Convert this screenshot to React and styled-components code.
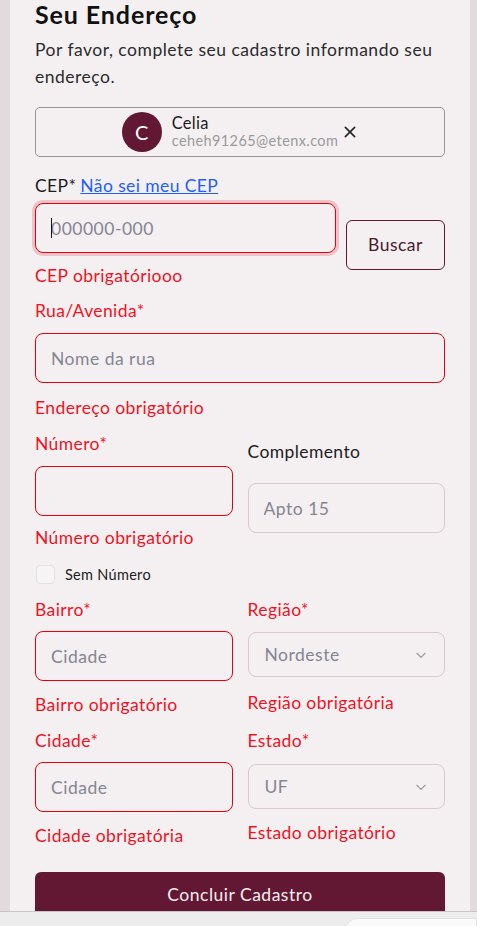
import React from 'react';
import styled, { createGlobalStyle } from 'styled-components';

const maroon = '#621732';
const red = '#e8000d';
const errorRed = '#f0131f';

const GlobalStyle = createGlobalStyle`
  html, body {
    margin: 0;
    padding: 0;
    background: #e2dadd;
    font-family: Lato, "Open Sans", sans-serif;
  }
  * { box-sizing: border-box; }
`;

const Page = styled.div`
  width: 477px;
  height: 926px;
  overflow: hidden;
  padding: 0 7px 0 10px;
`;

const Card = styled.main`
  background: #f4f0f2;
  min-height: 100%;
  padding: 0 25px 40px;
`;

const Title = styled.h1`
  margin: 0;
  padding-top: 1px;
  font-size: 25px;
  line-height: 26px;
  font-weight: 700;
  letter-spacing: 0.9px;
  color: #111;
`;

const Intro = styled.p`
  margin: 9px 0 0;
  font-size: 17.5px;
  line-height: 27px;
  color: #2b2b2b;
  letter-spacing: 0.5px;
`;

const UserChip = styled.div`
  margin-top: 17px;
  height: 50px;
  border: 1px solid #9a9597;
  border-radius: 5px;
  display: flex;
  align-items: center;
  justify-content: center;
  gap: 10px;
`;

const Avatar = styled.div`
  width: 40px;
  height: 40px;
  border-radius: 50%;
  background: ${maroon};
  color: #fff;
  display: flex;
  align-items: center;
  justify-content: center;
  font-size: 20px;
`;

const UserInfo = styled.div`
  display: flex;
  flex-direction: column;
  margin-top: -1px;
`;

const UserName = styled.span`
  font-size: 16.5px;
  line-height: 17px;
  letter-spacing: 0.3px;
  color: #1b1b1b;
`;

const UserEmail = styled.span`
  font-size: 14.5px;
  line-height: 17px;
  color: #9a9a9a;
  letter-spacing: 0.4px;
`;

const CloseButton = styled.button`
  border: none;
  background: none;
  padding: 0;
  margin-left: -6px;
  display: flex;
  color: #222;
`;

const Label = styled.label`
  display: block;
  font-size: 17.5px;
  line-height: 20px;
  letter-spacing: 0.4px;
  color: ${({ error }) => (error ? errorRed : '#1d1d1d')};
`;

const HelpLink = styled.a`
  color: #1f5eff;
  text-decoration: underline;
  margin-left: 4px;
`;

const CepRow = styled.div`
  display: flex;
  align-items: center;
  gap: 10px;
`;

const Column = styled.div`
  flex: 1;
  display: flex;
  flex-direction: column;
`;

const Input = styled.input`
  width: 100%;
  height: 50px;
  border-radius: 8px;
  border: 1px solid ${({ error }) => (error ? red : '#dac9ce')};
  background: #f4f0f2;
  padding: 0 15px;
  font-family: inherit;
  font-size: 17.5px;
  letter-spacing: 0.5px;
  color: #222;
  outline: none;
  box-shadow: ${({ focused }) => (focused ? '0 0 0 3px #efc3c8' : 'none')};
  &::placeholder {
    color: #858592;
  }
`;

const Caret = styled.span`
  position: absolute;
  left: 16px;
  top: 15px;
  width: 1px;
  height: 20px;
  background: #111;
`;

const InputWrap = styled.div`
  position: relative;
`;

const SearchButton = styled.button`
  width: 99px;
  height: 50px;
  flex: none;
  border: 1px solid ${maroon};
  border-radius: 6px;
  background: transparent;
  font-family: inherit;
  font-size: 17.5px;
  letter-spacing: 0.5px;
  color: #4b1a2c;
`;

const ErrorText = styled.span`
  display: block;
  margin-top: ${({ top }) => top || 12}px;
  font-size: 17.5px;
  line-height: 20px;
  letter-spacing: 0.4px;
  color: ${errorRed};
`;

const Field = styled.div`
  margin-top: ${({ top }) => top || 0}px;
  display: flex;
  flex-direction: column;
  & > ${Label} + * {
    margin-top: ${({ gap }) => gap || 12}px;
  }
`;

const Row = styled.div`
  display: grid;
  grid-template-columns: 1fr 1fr;
  gap: 15px;
  margin-top: ${({ top }) => top || 0}px;
  align-items: start;
`;

const CheckRow = styled.label`
  display: flex;
  align-items: center;
  gap: 10px;
  margin-top: 17px;
  font-size: 14.5px;
  letter-spacing: 0.3px;
  color: #1d1d1d;
`;

const CheckBox = styled.span`
  width: 19px;
  height: 19px;
  border-radius: 4px;
  border: 1px solid #e4dfe1;
  background: #f7f4f5;
  margin-left: 1px;
`;

const SelectBox = styled.div`
  height: 45px;
  border-radius: 8px;
  border: 1px solid #dac9ce;
  padding: 0 16px;
  display: flex;
  align-items: center;
  justify-content: space-between;
  font-size: 17.5px;
  letter-spacing: 0.5px;
  color: #858592;
`;

const SubmitButton = styled.button`
  display: block;
  width: 100%;
  height: 50px;
  margin-top: 26px;
  border: none;
  border-radius: 6px;
  background: ${maroon};
  color: #f6eef0;
  font-family: inherit;
  font-size: 17.5px;
  letter-spacing: 0.5px;
  padding-bottom: 6px;
`;

const BottomBar = styled.div`
  position: fixed;
  left: 0;
  right: 0;
  bottom: 0;
  height: 15px;
  background: #ededed;
  border-top: 1px solid #c6c6c6;
`;

const BarThumb = styled.div`
  position: absolute;
  left: 345px;
  right: 0;
  top: 6px;
  bottom: -10px;
  background: #fafafa;
  border-radius: 12px 0 0 0;
  border: 1px solid #e2e2e2;
`;

const Chevron = () => (
  <svg width="14" height="14" viewBox="0 0 24 24" fill="none" stroke="#9a9a9a" strokeWidth="2" strokeLinecap="round" strokeLinejoin="round">
    <path d="M5 9l7 7 7-7" />
  </svg>
);

const XIcon = () => (
  <svg width="16" height="16" viewBox="0 0 24 24" fill="none" stroke="#222" strokeWidth="2.4" strokeLinecap="round">
    <path d="M5 5l14 14M19 5L5 19" />
  </svg>
);

export default function App() {
  return (
    <Page>
      <GlobalStyle />
      <Card>
        <Title>Seu Endereço</Title>
        <Intro>Por favor, complete seu cadastro informando seu endereço.</Intro>

        <UserChip>
          <Avatar>C</Avatar>
          <UserInfo>
            <UserName>Celia</UserName>
            <UserEmail>ceheh91265@etenx.com</UserEmail>
          </UserInfo>
          <CloseButton aria-label="remover"><XIcon /></CloseButton>
        </UserChip>

        <Field top={19} gap={7}>
          <Label>
            CEP*
            <HelpLink href="#">Não sei meu CEP</HelpLink>
          </Label>
          <CepRow>
            <Column>
              <InputWrap>
                <Input error focused placeholder="000000-000" />
                <Caret />
              </InputWrap>
              <ErrorText top={13}>CEP obrigatóriooo</ErrorText>
            </Column>
            <SearchButton>Buscar</SearchButton>
          </CepRow>
        </Field>

        <Field top={15}>
          <Label error>Rua/Avenida*</Label>
          <Input error placeholder="Nome da rua" />
          <ErrorText top={15}>Endereço obrigatório</ErrorText>
        </Field>

        <Row top={16}>
          <Field>
            <Label error>Número*</Label>
            <Input error />
            <ErrorText top={12}>Número obrigatório</ErrorText>
          </Field>
          <Field top={8} gap={21}>
            <Label>Complemento</Label>
            <Input placeholder="Apto 15" />
          </Field>
        </Row>

        <CheckRow>
          <CheckBox />
          Sem Número
        </CheckRow>

        <Row top={16}>
          <Field gap={11}>
            <Label error>Bairro*</Label>
            <Input error placeholder="Cidade" />
            <ErrorText top={14}>Bairro obrigatório</ErrorText>
          </Field>
          <Field gap={12}>
            <Label error>Região*</Label>
            <SelectBox>Nordeste<Chevron /></SelectBox>
            <ErrorText top={16}>Região obrigatória</ErrorText>
          </Field>
        </Row>

        <Row top={16}>
          <Field gap={11}>
            <Label error>Cidade*</Label>
            <Input error placeholder="Cidade" />
            <ErrorText top={14}>Cidade obrigatória</ErrorText>
          </Field>
          <Field gap={13}>
            <Label error>Estado*</Label>
            <SelectBox>UF<Chevron /></SelectBox>
            <ErrorText top={14}>Estado obrigatório</ErrorText>
          </Field>
        </Row>

        <SubmitButton>Concluir Cadastro</SubmitButton>
      </Card>
      <BottomBar>
        <BarThumb />
      </BottomBar>
    </Page>
  );
}
